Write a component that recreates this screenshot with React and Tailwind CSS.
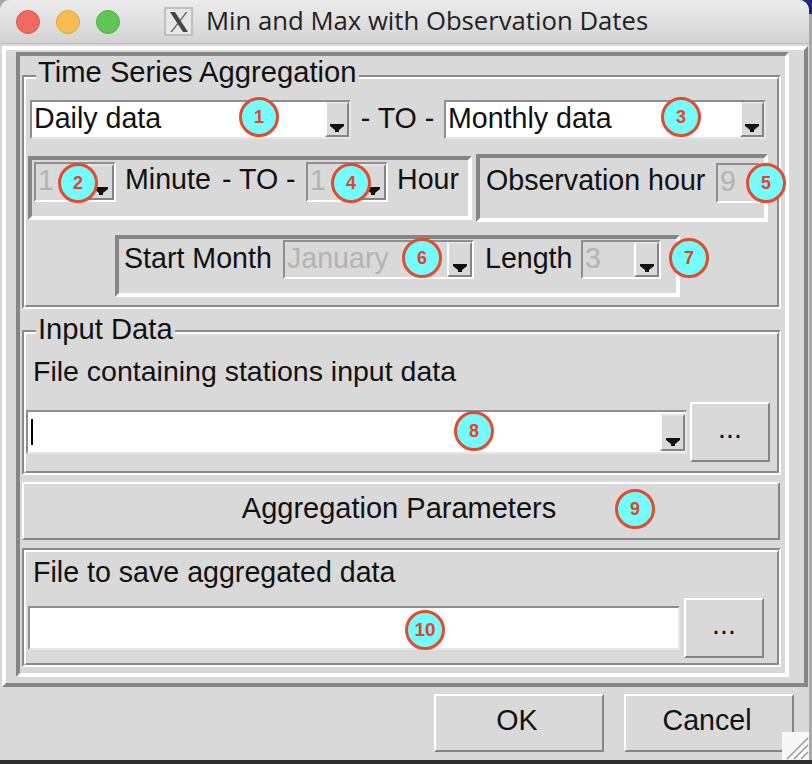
import React from "react";

const FONT = { fontFamily: '"Liberation Sans", Arial, sans-serif' };

function Arrow() {
  return (
    <svg width="14" height="8" viewBox="0 0 14 8" className="block">
      <polygon points="0,0 14,0 14,2 9,6 9,8 5,8 5,6 0,2" fill="#111" />
    </svg>
  );
}

function DropButton({ className }) {
  return (
    <div className={"flex flex-none items-end justify-center pb-[3px] border-t-2 border-l-2 border-r-2 border-b-2 border-t-[#e4e4e4] border-l-white border-r-[#858585] border-b-[#858585] bg-[#d9d9d9] " + className}>
      <Arrow />
    </div>
  );
}

function Combo({ className, text, disabled, btn, caret }) {
  const skin = disabled
    ? "border-t-[#8e8e8e] border-l-[#8e8e8e] border-r-white border-b-white bg-[#d9d9d9] "
    : "border-t-[#8e8e8e] border-l-[#8e8e8e] border-r-[#e6e6e6] border-b-[#e6e6e6] bg-white ";
  return (
    <div className={"flex flex-none items-stretch border-2 " + skin + className}>
      <div className={"flex-1 min-w-0 leading-[33px] pl-[2px] whitespace-nowrap " + (disabled ? "text-[#b3b3b3]" : "text-[#111]")}>
        {caret ? <div className="w-[2px] h-[26px] mt-[7px] ml-[1px] bg-black" /> : text}
      </div>
      {btn}
    </div>
  );
}

function Groove({ className, children, legend, legendClass }) {
  return (
    <div className={"relative border-2 border-t-[#8a8a8a] border-l-[#8a8a8a] border-r-white border-b-white " + className}>
      <div className="h-full border-2 border-t-white border-l-white border-r-[#8a8a8a] border-b-[#8a8a8a]">
        {children}
      </div>
      {legend && (
        <span className={"absolute left-[12px] h-[32px] leading-[32px] px-[2px] bg-[#d9d9d9] whitespace-nowrap " + (legendClass || "")}>
          {legend}
        </span>
      )}
    </div>
  );
}

function Raised({ className, children }) {
  return (
    <div className={"flex flex-none items-center justify-center border-2 border-t-white border-l-white border-r-[#858585] border-b-[#858585] bg-[#d9d9d9] " + className}>
      {children}
    </div>
  );
}

function Panel({ className, children }) {
  return (
    <div className={"flex-none flex items-start border-4 border-t-[#858585] border-l-[#858585] border-r-white border-b-white " + className}>
      {children}
    </div>
  );
}

function Badge({ className, n }) {
  return (
    <div className={"absolute w-[40px] h-[40px] rounded-full bg-[#74fbfd] border-[3px] border-[#e34a2e] flex items-center justify-center text-[#e0442a] text-[18px] font-bold " + className}>
      {n}
    </div>
  );
}

export default function App() {
  return (
    <div style={FONT} className="relative w-[812px] h-[764px] overflow-hidden bg-[#a8a8a8] text-[28.6px] text-[#111]">
      <div className="absolute right-0 top-0 w-[14px] h-[14px] bg-[#1d2b6e]" />
      <div className="absolute left-0 bottom-0 w-full h-[4px] bg-[#2e2e2e]" />
      <div className="relative w-[809px] h-[760px] rounded-t-[10px] overflow-hidden bg-[#d9d9d9]">
        {/* title bar */}
        <div className="flex items-center h-[44px] bg-gradient-to-b from-[#ececec] to-[#d3d3d3] border-b border-[#bdbdbd]">
          <div className="flex items-center gap-[16px] pl-[16px]">
            <div className="w-[24px] h-[24px] rounded-full bg-[#ee6a5f] border border-[#dc5a50]" />
            <div className="w-[24px] h-[24px] rounded-full bg-[#f5bd4f] border border-[#dfa53c]" />
            <div className="w-[24px] h-[24px] rounded-full bg-[#61c454] border border-[#52ae46]" />
          </div>
          <div className="ml-[44px] w-[29px] h-[29px] bg-[#e6e6e6] border-2 border-[#bfbfbf] flex items-center justify-center overflow-hidden">
            <svg width="24" height="24" viewBox="0 0 24 24">
              <path d="M3 2 L8 2 L21 22 L16 22 Z" fill="#444" />
              <path d="M19 2 L20.5 2 L5 22 L3.5 22 Z" fill="#555" />
            </svg>
          </div>
          <span className="ml-[13px] text-[25.7px] text-[#222] whitespace-nowrap" style={{ fontFamily: '"Open Sans", sans-serif' }}>
            Min and Max with Observation Dates
          </span>
        </div>

        {/* main raised frame */}
        <div className="ml-[2px] mt-[2px] w-[806px] h-[641px] border-4 border-t-white border-l-white border-r-[#858585] border-b-[#858585] pt-[2px] pl-[10px] pr-[15px] pb-[6px]">
          <div className="h-full border-4 border-t-[#858585] border-l-[#858585] border-r-white border-b-white pl-[2px] pr-[4px]">
            <Groove className="mt-[19px] h-[234px]" legend="Time Series Aggregation" legendClass="top-[-21px] text-[29.2px]">
              {/* row 1 */}
              <div className="flex items-start pt-[21px] pl-[4px]">
                <Combo className="w-[321px] h-[39px]" text="Daily data" btn={<DropButton className="w-[24px]" />} />
                <div className="w-[93px] text-center leading-[36px]">- TO -</div>
                <Combo className="w-[322px] h-[39px]" text="Monthly data" btn={<DropButton className="w-[24px]" />} />
              </div>
              {/* row 2 */}
              <div className="flex items-start pl-[2px] mt-[15px] h-[68px]">
                <Panel className="w-[444px] h-[64px] mt-[2px] pt-[2px] pl-[2px]">
                  <Combo className="w-[82px] h-[40px]" disabled text="1" btn={<DropButton className="w-[26px]" />} />
                  <span className="ml-[9px] w-[97px] flex-none leading-[35px]">Minute</span>
                  <span className="w-[84px] flex-none leading-[35px] whitespace-nowrap">- TO -</span>
                  <Combo className="w-[82px] h-[40px]" disabled text="1" btn={<DropButton className="w-[26px]" />} />
                  <span className="ml-[9px] leading-[35px]">Hour</span>
                </Panel>
                <Panel className="w-[292px] h-[68px] ml-[4px] pt-[5px] pl-[6px]">
                  <span className="w-[230px] flex-none leading-[35px] whitespace-nowrap">Observation hour</span>
                  <Combo className="w-[44px] h-[40px]" disabled text="9" />
                </Panel>
              </div>
              {/* row 3 */}
              <div className="flex justify-start pl-[89px] mt-[13px]">
                <Panel className="w-[565px] h-[62px] pt-[1px] pl-[5px]">
                  <span className="w-[159px] flex-none leading-[36px] whitespace-nowrap">Start Month</span>
                  <Combo className="w-[191px] h-[39px]" disabled text="January" btn={<DropButton className="w-[25px]" />} />
                  <span className="ml-[11px] w-[96px] flex-none leading-[36px]">Length</span>
                  <Combo className="w-[80px] h-[39px]" disabled text="3" btn={<DropButton className="w-[25px]" />} />
                </Panel>
              </div>
            </Groove>

            <Groove className="mt-[21px] h-[145px]" legend="Input Data" legendClass="top-[-19px] text-[29.2px]">
              <div className="pl-[7px] pt-[20px] leading-[35px] whitespace-nowrap text-[28.5px]">File containing stations input data</div>
              <div className="flex items-start mt-[3px]">
                <Combo className="w-[661px] h-[44px] mt-[18px]" caret btn={<DropButton className="w-[25px] mt-[2px] mb-[1px]" />} />
                <Raised className="w-[80px] h-[60px] ml-[3px] mt-[10px]"><span className="mt-[-8px]">...</span></Raised>
              </div>
            </Groove>

            <Raised className="w-[758px] h-[58px] mt-[7px]"><span className="mt-[-4px] -translate-x-[2px] text-[29px]">Aggregation Parameters</span></Raised>

            <Groove className="mt-[8px] h-[119px]">
              <div className="pl-[7px] pt-[2px] leading-[36px] whitespace-nowrap">File to save aggregated data</div>
              <div className="flex items-start mt-[10px] pl-[2px]">
                <Combo className="w-[652px] h-[44px] mt-[6px]" text="" />
                <Raised className="w-[80px] h-[60px] ml-[4px] -mt-[2px]"><span className="mt-[-8px]">...</span></Raised>
              </div>
            </Groove>
          </div>
        </div>

        {/* bottom buttons */}
        <div className="flex justify-end gap-[20px] pt-[7px] pr-[15px]">
          <Raised className="w-[170px] h-[58px]"><span className="mt-[-6px] -translate-x-[2px]">OK</span></Raised>
          <Raised className="w-[170px] h-[58px]"><span className="mt-[-6px] -translate-x-[2px]">Cancel</span></Raised>
        </div>

        {/* resize grip */}
        <div className="absolute right-0 bottom-0 w-[27px] h-[28px] bg-[#f7f7f7]">
          <svg width="27" height="28" viewBox="0 0 27 28" className="block">
            <path d="M5 27 L26 6 M12 27 L26 13 M19 27 L26 20" stroke="#9a9a9a" strokeWidth="1.5" fill="none" />
          </svg>
        </div>
      </div>

      <Badge className="left-[239px] top-[97px]" n="1" />
      <Badge className="left-[58px] top-[163px]" n="2" />
      <Badge className="left-[661px] top-[97px]" n="3" />
      <Badge className="left-[331px] top-[163px]" n="4" />
      <Badge className="left-[746px] top-[163px]" n="5" />
      <Badge className="left-[402px] top-[238px]" n="6" />
      <Badge className="left-[669px] top-[238px]" n="7" />
      <Badge className="left-[454px] top-[411px]" n="8" />
      <Badge className="left-[615px] top-[489px]" n="9" />
      <Badge className="left-[405px] top-[610px] text-[19px]" n="10" />
    </div>
  );
}
